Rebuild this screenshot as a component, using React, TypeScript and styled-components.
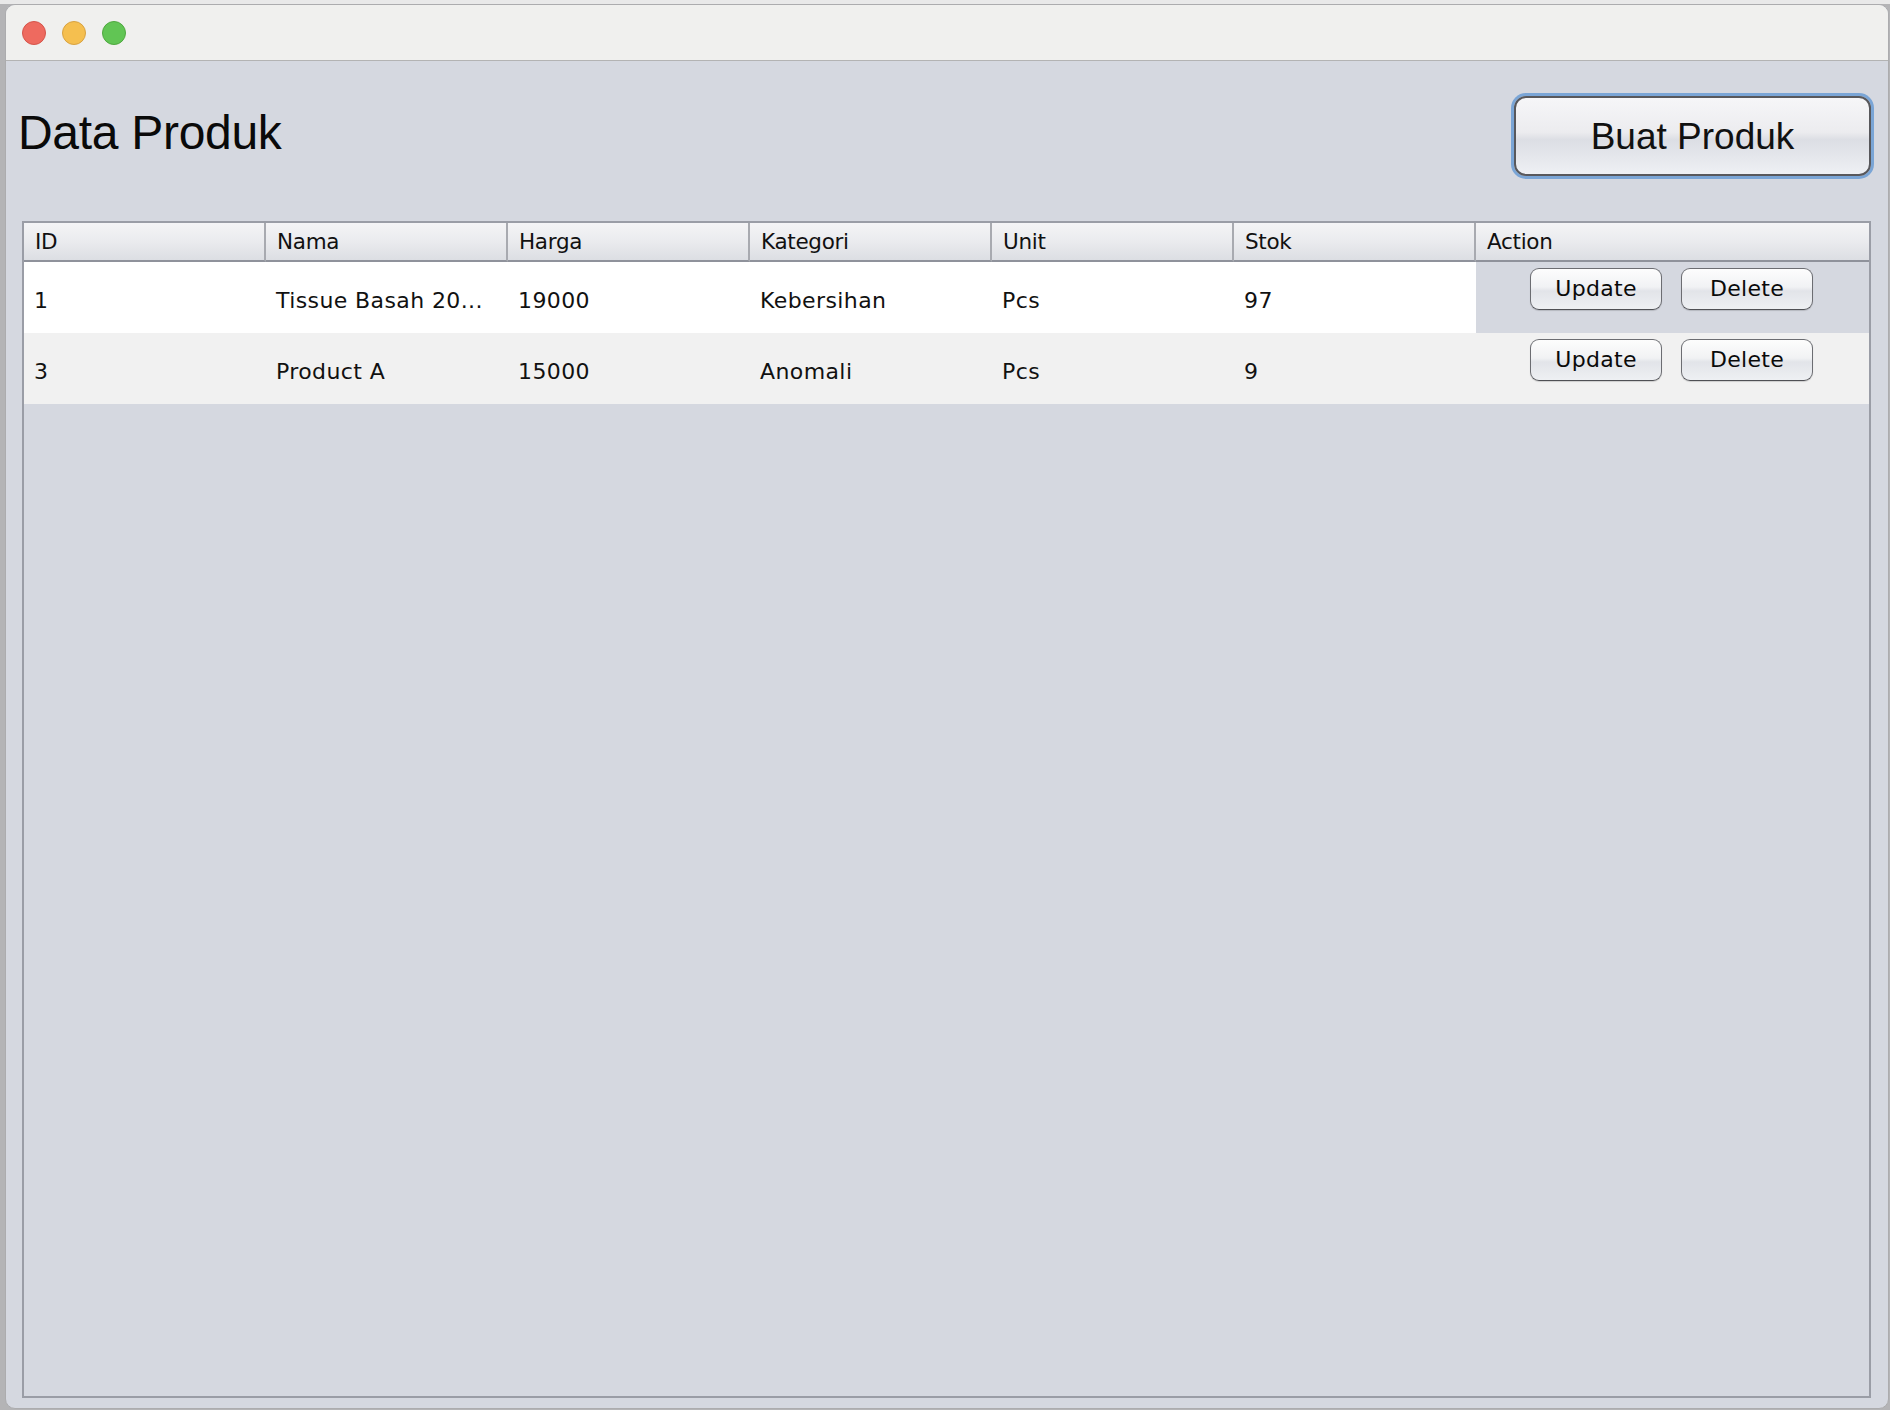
import React from "react";
import styled, { createGlobalStyle } from "styled-components";

const GlobalStyle = createGlobalStyle`
  html, body {
    margin: 0;
    padding: 0;
    background: #c3c3c5;
  }
  * { box-sizing: border-box; }
`;

const Desktop = styled.div`
  width: 1890px;
  height: 1410px;
  padding: 4px 1px 1px 5px;
  background: linear-gradient(#e9e9e9 0, #e9e9e9 4px, #b4b4b6 4px);
`;

const Window = styled.div`
  width: 100%;
  height: 100%;
  display: flex;
  flex-direction: column;
  border: 1px solid #acacae;
  border-radius: 10px;
  overflow: hidden;
  background: #d5d8e0;
`;

const TitleBar = styled.div`
  height: 56px;
  flex: none;
  display: flex;
  align-items: center;
  gap: 16px;
  padding-left: 16px;
  background: #f0f0ee;
  border-bottom: 1px solid #b3b3b3;
`;

const Light = styled.span<{ $fill: string; $edge: string }>`
  width: 24px;
  height: 24px;
  border-radius: 50%;
  background: ${(p) => p.$fill};
  border: 1px solid ${(p) => p.$edge};
`;

const Content = styled.div`
  flex: 1;
  display: flex;
  flex-direction: column;
  padding: 34px 17px 10px 12px;
  min-height: 0;
`;

const HeaderRow = styled.div`
  display: flex;
  align-items: center;
  justify-content: space-between;
  margin-bottom: 45px;
`;

const Title = styled.h1`
  margin: 0 0 6px;
  font-family: "Liberation Sans", Arial, sans-serif;
  font-weight: 400;
  font-size: 48px;
  color: #0a0a0a;
  letter-spacing: -0.3px;
`;

const PrimaryButton = styled.button`
  width: 357px;
  height: 80px;
  margin-top: 1px;
  border-radius: 12px;
  border: 2px solid #58585c;
  box-shadow: 0 0 0 3px #7aa5d6;
  background: linear-gradient(#f6f6f8 0%, #ececef 45%, #dcdee4 55%, #eef0f4 100%);
  font-family: "Liberation Sans", Arial, sans-serif;
  font-size: 37px;
  color: #111;
  cursor: pointer;
  padding: 2px 0 0;
`;

const TableBox = styled.div`
  flex: 1;
  margin-left: 4px;
  border: 2px solid #9a9da6;
  display: flex;
  flex-direction: column;
  background: #d5d8e0;
  font-family: "DejaVu Sans", Verdana, sans-serif;
  color: #111;
`;

const Grid = styled.div`
  display: grid;
  grid-template-columns: repeat(6, 242px) 1fr;
`;

const HeadCell = styled.div<{ $last?: boolean }>`
  height: 39px;
  display: flex;
  align-items: center;
  padding-left: 11px;
  font-size: 21.5px;
  background: linear-gradient(#f4f4f6 0%, #eaebee 50%, #dcdee3 100%);
  border-bottom: 2px solid #8f929b;
  border-right: ${(p) => (p.$last ? "none" : "2px solid #a8aab0")};
  letter-spacing: -0.3px;
`;

const Cell = styled.div<{ $bg: string }>`
  height: 71px;
  display: flex;
  align-items: center;
  padding: 5px 0 0 10px;
  font-size: 22px;
  letter-spacing: 0.4px;
  background: ${(p) => p.$bg};
  white-space: nowrap;
  overflow: hidden;
`;

const ActionCell = styled.div<{ $bg: string }>`
  height: 71px;
  display: flex;
  justify-content: center;
  align-items: flex-start;
  gap: 19px;
  padding-top: 6px;
  padding-right: 2px;
  background: ${(p) => p.$bg};
`;

const SmallButton = styled.button`
  width: 132px;
  height: 42px;
  border-radius: 9px;
  border: 1.5px solid #6c6d72;
  border-bottom-color: #4f5055;
  background: linear-gradient(#fdfdfd 0%, #f1f2f4 45%, #e2e4e9 55%, #eef0f3 100%);
  box-shadow: 0 1px 1px rgba(0, 0, 0, 0.15);
  font-family: "DejaVu Sans", Verdana, sans-serif;
  font-size: 22px;
  letter-spacing: 0.3px;
  color: #0a0a0a;
  padding: 0 0 1px;
  cursor: pointer;
`;

type Product = {
  id: string;
  nama: string;
  harga: string;
  kategori: string;
  unit: string;
  stok: string;
};

const products: Product[] = [
  { id: "1", nama: "Tissue Basah 20...", harga: "19000", kategori: "Kebersihan", unit: "Pcs", stok: "97" },
  { id: "3", nama: "Product A", harga: "15000", kategori: "Anomali", unit: "Pcs", stok: "9" },
];

const headers = ["ID", "Nama", "Harga", "Kategori", "Unit", "Stok", "Action"];

export default function App() {
  return (
    <>
      <GlobalStyle />
      <Desktop>
        <Window>
          <TitleBar>
            <Light $fill="#ee6a5f" $edge="#d5544a" />
            <Light $fill="#f5bf4f" $edge="#d8a241" />
            <Light $fill="#61c554" $edge="#4fa83f" />
          </TitleBar>
          <Content>
            <HeaderRow>
              <Title>Data Produk</Title>
              <PrimaryButton>Buat Produk</PrimaryButton>
            </HeaderRow>
            <TableBox>
              <Grid>
                {headers.map((h, i) => (
                  <HeadCell key={h} $last={i === headers.length - 1}>
                    {h}
                  </HeadCell>
                ))}
                {products.map((p, r) => {
                  const bg = r % 2 === 0 ? "#ffffff" : "#f1f1f1";
                  const actionBg = r % 2 === 0 ? "transparent" : "#f1f1f1";
                  return (
                    <React.Fragment key={p.id}>
                      <Cell $bg={bg}>{p.id}</Cell>
                      <Cell $bg={bg}>{p.nama}</Cell>
                      <Cell $bg={bg}>{p.harga}</Cell>
                      <Cell $bg={bg}>{p.kategori}</Cell>
                      <Cell $bg={bg}>{p.unit}</Cell>
                      <Cell $bg={bg}>{p.stok}</Cell>
                      <ActionCell $bg={actionBg}>
                        <SmallButton>Update</SmallButton>
                        <SmallButton>Delete</SmallButton>
                      </ActionCell>
                    </React.Fragment>
                  );
                })}
              </Grid>
            </TableBox>
          </Content>
        </Window>
      </Desktop>
    </>
  );
}
